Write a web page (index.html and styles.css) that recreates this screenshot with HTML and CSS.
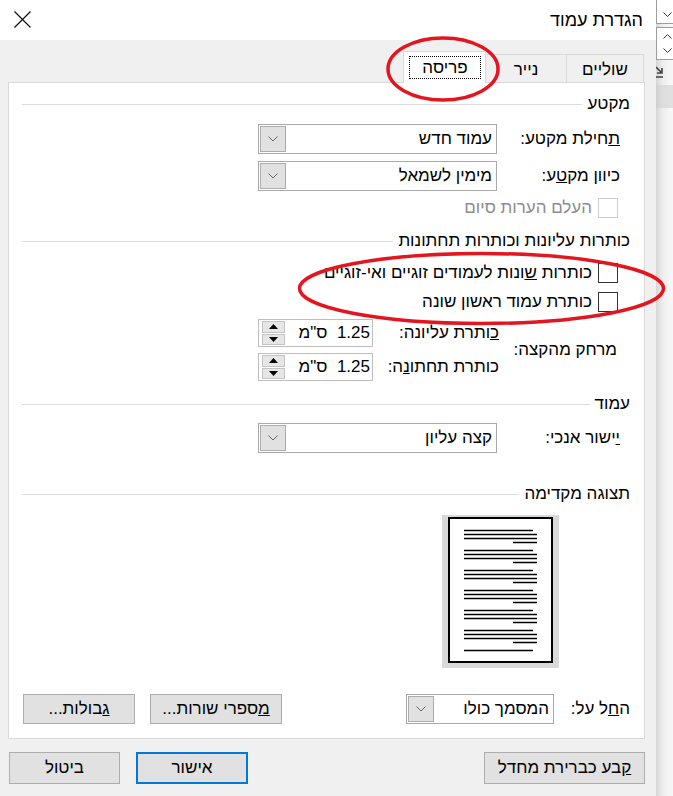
FILE: index.html
```html
<!DOCTYPE html>
<html lang="he">
<head>
    <meta charset="UTF-8">
    <title>הגדרת עמוד</title>
    <link rel="stylesheet" href="styles.css">
</head>
<body>
    <div class="screen">
        <!-- Page Setup dialog -->
        <div class="dialog" dir="rtl">
            <div class="titlebar">
                <span class="title">הגדרת עמוד</span>
                <span class="close">
                    <svg width="17" height="17" viewBox="0 0 17 17"><path d="M0.5 0.5 L16.5 16.5 M16.5 0.5 L0.5 16.5" stroke="#111" stroke-width="1.2" fill="none"/></svg>
                </span>
            </div>

            <div class="tabs">
                <div class="tab t-margins">שוליים</div>
                <div class="tab t-paper">נייר</div>
                <div class="tab active"><span class="focus">פריסה</span></div>
            </div>

            <div class="panel">
                <div class="group-title g1"><span>מקטע</span><i class="rule"></i></div>

                <div class="field f1">
                    <span class="label"><u>ת</u>חילת מקטע:</span>
                    <div class="combo"><span class="combo-text">עמוד חדש</span><span class="combo-btn"><svg width="10" height="6" viewBox="0 0 10 6"><path d="M0.5 0.5 L5 5 L9.5 0.5" stroke="#666" fill="none"/></svg></span></div>
                </div>
                <div class="field f2">
                    <span class="label">כיוון מק<u>ט</u>ע:</span>
                    <div class="combo"><span class="combo-text">מימין לשמאל</span><span class="combo-btn"><svg width="10" height="6" viewBox="0 0 10 6"><path d="M0.5 0.5 L5 5 L9.5 0.5" stroke="#666" fill="none"/></svg></span></div>
                </div>
                <div class="check disabled c0"><span class="box"></span><span>העלם הערות סיום</span></div>

                <div class="group-title g2"><span>כותרות עליונות וכותרות תחתונות</span><i class="rule"></i></div>

                <div class="check c1"><span class="box"></span><span>כותרות <u>ש</u>ונות לעמודים זוגיים ואי-זוגיים</span></div>
                <div class="check c2"><span class="box"></span><span>כותרת עמוד ראשו<u>ן</u> שונה</span></div>

                <div class="spacing">
                    <span class="label main">מרחק מהקצה:</span>
                    <span class="label sub"><u>כ</u>ותרת עליונה:</span>
                    <div class="spin"><span class="spin-val">1.25&nbsp; ס"מ</span><span class="spin-btns"><span class="half"><svg width="9" height="5" viewBox="0 0 9 5"><path d="M0 5 L4.5 0 L9 5 Z" fill="#000"/></svg></span><span class="half"><svg width="9" height="5" viewBox="0 0 9 5"><path d="M0 0 L4.5 5 L9 0 Z" fill="#000"/></svg></span></span></div>
                    <span class="label sub">כותרת תחתו<u>נ</u>ה:</span>
                    <div class="spin"><span class="spin-val">1.25&nbsp; ס"מ</span><span class="spin-btns"><span class="half"><svg width="9" height="5" viewBox="0 0 9 5"><path d="M0 5 L4.5 0 L9 5 Z" fill="#000"/></svg></span><span class="half"><svg width="9" height="5" viewBox="0 0 9 5"><path d="M0 0 L4.5 5 L9 0 Z" fill="#000"/></svg></span></span></div>
                </div>

                <div class="group-title g3"><span>עמוד</span><i class="rule"></i></div>

                <div class="field f3">
                    <span class="label"><u>י</u>ישור אנכי:</span>
                    <div class="combo"><span class="combo-text">קצה עליון</span><span class="combo-btn"><svg width="10" height="6" viewBox="0 0 10 6"><path d="M0.5 0.5 L5 5 L9.5 0.5" stroke="#666" fill="none"/></svg></span></div>
                </div>

                <div class="group-title g4"><span>תצוגה מקדימה</span><i class="rule"></i></div>

                <div class="preview">
                    <svg width="117" height="153" viewBox="0 0 117 153">
                        <rect x="0" y="0" width="117" height="153" fill="#d9d9d9"/>
                        <rect x="7" y="3" width="103" height="144" fill="#fff" stroke="#000" stroke-width="2"/>
                        <g stroke="#000" stroke-width="1.5">
                            <path d="M22 15.5 H91 M22 19.5 H95 M22 23.5 H95 M71 27.5 H95"/>
                            <path d="M22 35.5 H91 M22 39.5 H95 M22 43.5 H95 M71 47.5 H95"/>
                            <path d="M22 55.5 H91 M22 59.5 H95 M22 63.5 H95 M71 67.5 H95"/>
                            <path d="M22 75.5 H91 M22 79.5 H95 M22 83.5 H95 M71 87.5 H95"/>
                            <path d="M22 95.5 H91 M22 99.5 H95 M22 103.5 H95 M71 107.5 H95"/>
                            <path d="M22 115.5 H91 M22 119.5 H95 M22 123.5 H95 M71 127.5 H95"/>
                            <path d="M22 135.5 H91"/>
                        </g>
                    </svg>
                </div>

                <div class="apply-row">
                    <div class="apply">
                        <span class="label">ה<u>ח</u>ל על:</span>
                        <div class="combo small"><span class="combo-text">המסמך כולו</span><span class="combo-btn"><svg width="10" height="6" viewBox="0 0 10 6"><path d="M0.5 0.5 L5 5 L9.5 0.5" stroke="#666" fill="none"/></svg></span></div>
                    </div>
                    <div class="panel-btns">
                        <button class="btn w-lines"><u>מ</u>ספרי שורות...</button>
                        <button class="btn w-borders"><u>ג</u>בולות...</button>
                    </div>
                </div>
            </div>

            <div class="footer">
                <button class="btn w-default"><u>ק</u>בע כברירת מחדל</button>
                <div class="footer-right">
                    <button class="btn w-ok primary">אישור</button>
                    <button class="btn w-cancel">ביטול</button>
                </div>
            </div>
        </div>

        <!-- window behind the dialog -->
        <div class="side">
            <div class="side-box b1"><svg width="9" height="5" viewBox="0 0 9 5"><path d="M0.5 0.5 L4.5 4.5 L8.5 0.5" stroke="#333" fill="none"/></svg></div>
            <div class="side-box b2">
                <svg width="9" height="5" viewBox="0 0 9 5"><path d="M0.5 4.5 L4.5 0.5 L8.5 4.5" stroke="#333" fill="none"/></svg>
                <svg width="9" height="5" viewBox="0 0 9 5"><path d="M0.5 0.5 L4.5 4.5 L8.5 0.5" stroke="#333" fill="none"/></svg>
            </div>
            <div class="side-icon"><svg width="8" height="16" viewBox="0 0 8 16"><path d="M0 2 L6 8 M6 3 V8 H1 M0 12 H7" stroke="#444" stroke-width="1.6" fill="none"/></svg></div>
            <div class="side-bar"></div>
        </div>
    </div>

    <!-- red annotation marks -->
    <svg class="marks" width="673" height="796" viewBox="0 0 673 796">
        <ellipse cx="443" cy="69" rx="55" ry="31" fill="none" stroke="#e3151f" stroke-width="3.5"/>
        <ellipse cx="481.5" cy="288.5" rx="182" ry="35" fill="none" stroke="#e3151f" stroke-width="3.5"/>
    </svg>
</body>
</html>
```

FILE: styles.css
```css
* {
    box-sizing: border-box;
}

body {
    margin: 0;
    font-family: "Liberation Sans", "DejaVu Sans", sans-serif;
    font-size: 17px;
    color: #000;
    background: #f8f8f8;
    overflow: hidden;
}

.screen {
    display: flex;
    direction: ltr;
    width: 673px;
    height: 796px;
}

/* Dialog */
.dialog {
    direction: rtl;
    flex: none;
    width: 656px;
    height: 796px;
    background: #f0f0f0;
    display: flex;
    flex-direction: column;
}

.titlebar {
    height: 40px;
    background: #fff;
    display: flex;
    align-items: center;
    justify-content: space-between;
    padding-right: 13px;
    padding-left: 14px;
}

.title {
    font-size: 18px;
}

.close {
    display: flex;
    margin-top: -2px;
}

/* Tabs */
.tabs {
    height: 42px;
    display: flex;
    align-items: flex-end;
    padding-right: 12px;
}

.tab {
    height: 28px;
    border: 1px solid #d9d9d9;
    border-bottom: none;
    display: flex;
    align-items: center;
    justify-content: center;
    padding-top: 2px;
}

.tab + .tab {
    margin-right: -1px;
}

.t-margins { width: 78px; }
.t-paper { width: 82px; }

.tab.active {
    width: 83px;
    height: 32px;
    background: #fff;
    margin-bottom: -1px;
    position: relative;
    z-index: 1;
    padding: 4px 4px 4px 5px;
}

.focus {
    width: 100%;
    height: 100%;
    border: 1px dotted #000;
    display: flex;
    align-items: center;
    justify-content: center;
}

/* Panel */
.panel {
    height: 657px;
    margin-left: 8px;
    margin-right: 11px;
    background: #fff;
    border: 1px solid #d9d9d9;
    padding-right: 14px;
    padding-left: 13px;
    display: flex;
    flex-direction: column;
}

.group-title {
    height: 20px;
    display: flex;
    align-items: center;
    gap: 5px;
    white-space: nowrap;
}

.rule {
    flex: 1;
    height: 1px;
    background: #dcdcdc;
}

.g1 { margin-top: 11px; }
.g2 { margin-top: 13px; }
.g3 { margin-top: 13px; }
.g4 { margin-top: 31px; }

.field {
    height: 30px;
    display: flex;
    align-items: center;
    padding-right: 10px;
}

.field .label {
    width: 123px;
}

.f1 { margin-top: 10px; }
.f2 { margin-top: 7px; }
.f3 { margin-top: 9px; }

.combo {
    width: 239px;
    height: 30px;
    border: 1px solid #a9a9a9;
    background: #fff;
    padding: 1px;
    display: flex;
    align-items: center;
    justify-content: space-between;
}

.combo-text {
    padding-right: 3px;
    white-space: nowrap;
}

.combo-btn {
    width: 26px;
    height: 26px;
    background: #e1e1e1;
    border: 1px solid #adadad;
    display: flex;
    align-items: center;
    justify-content: center;
}

.combo.small {
    width: 148px;
}

/* Checkboxes */
.check {
    height: 20px;
    display: flex;
    align-items: center;
    gap: 6px;
    padding-right: 12px;
}

.box {
    width: 20px;
    height: 20px;
    border: 1px solid #333;
    background: #fff;
}

.check.disabled {
    color: #8d8d8d;
}

.check.disabled .box {
    border-color: #cccccc;
}

.c0 { margin-top: 7px; }
.c1 { margin-top: 12px; }
.c2 { margin-top: 9px; }

/* Header / footer distance */
.spacing {
    margin-top: 7px;
    padding-right: 13px;
    display: grid;
    grid-template-columns: 118px 126px 115px;
    grid-template-rows: 28px 28px;
    row-gap: 6px;
    align-items: center;
}

.spacing .main {
    grid-row: 1 / 3;
    grid-column: 1;
}

.spin {
    height: 28px;
    border: 1px solid #bdbdbd;
    display: flex;
    align-items: center;
    justify-content: space-between;
    padding: 0 2px 0 2px;
}

.spin-val {
    white-space: nowrap;
}

.spin-btns {
    width: 23px;
    height: 24px;
    display: flex;
    flex-direction: column;
    gap: 1px;
    margin-left: 1px;
}

.half {
    flex: 1;
    background: #e6e6e6;
    border: 1px solid #c4c4c4;
    display: flex;
    align-items: center;
    justify-content: center;
}

/* Preview */
.preview {
    margin-top: 11px;
    margin-right: 71px;
    align-self: flex-start;
    height: 153px;
    display: flex;
}

/* Apply row */
.apply-row {
    margin-top: 26px;
    height: 30px;
    display: flex;
    justify-content: space-between;
    align-items: center;
}

.apply {
    display: flex;
    align-items: center;
}

.apply .label {
    width: 76px;
}

.panel-btns {
    display: flex;
    gap: 15px;
    margin-left: 1px;
}

.btn {
    font-family: inherit;
    font-size: 17px;
    color: #000;
    background: #e1e1e1;
    border: 1px solid #adadad;
    padding: 0;
    height: 30px;
}

.w-lines { width: 132px; }
.w-borders { width: 112px; }

/* Footer */
.footer {
    margin-top: 13px;
    display: flex;
    justify-content: space-between;
    padding-right: 11px;
    padding-left: 9px;
}

.footer .btn {
    height: 32px;
}

.footer-right {
    display: flex;
    gap: 16px;
}

.w-default { width: 161px; }
.w-ok { width: 112px; }
.w-cancel { width: 111px; }

.btn.primary {
    border: 2px solid #0078d7;
}

/* Window behind */
.side {
    flex: 1;
    display: flex;
    flex-direction: column;
    background: linear-gradient(to right, #d6d6d6, #ececec 6px, #f7f7f7 14px);
}

.side-box {
    background: #fff;
    border-left: 1px solid #9c9c9c;
    border-bottom: 1px solid #9c9c9c;
    display: flex;
    flex-direction: column;
    align-items: center;
    justify-content: center;
    padding-left: 5px;
}

.b1 {
    height: 24px;
    padding-top: 6px;
}

.b2 {
    margin-top: 3px;
    height: 33px;
    gap: 9px;
    border-top: 1px solid #9c9c9c;
}

.side-icon {
    height: 25px;
    display: flex;
    align-items: center;
}

.side-bar {
    height: 23px;
    background: linear-gradient(to right, #cfcfcf, #dcdcdc 6px, #e0e0e0);
}

/* Annotations */
.marks {
    position: absolute;
    top: 0;
    left: 0;
    pointer-events: none;
}
```
